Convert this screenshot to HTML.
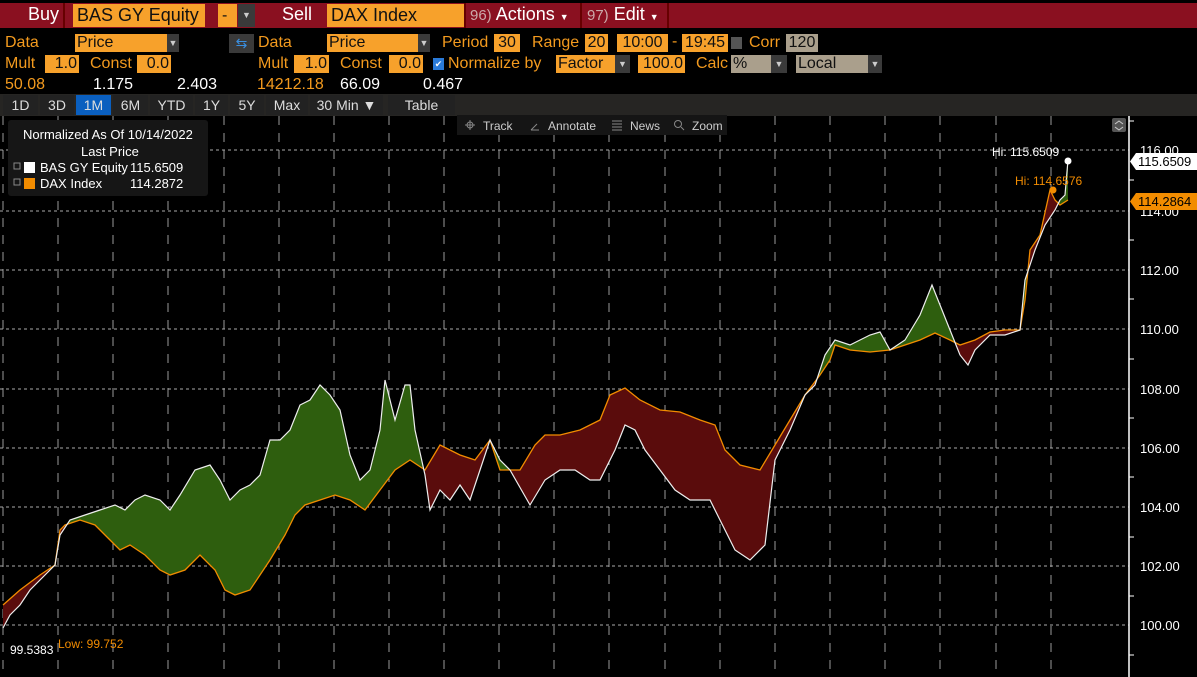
<!DOCTYPE html>
<html><head><meta charset="utf-8"><style>
*{margin:0;padding:0;box-sizing:border-box}
body{width:1197px;height:677px;background:#000;overflow:hidden;position:relative;font-family:"Liberation Sans Narrow","Liberation Sans",sans-serif;color:#f39a1e}
.a{position:absolute;white-space:nowrap}
.red{background:#8a1020}
.ob{background:#f7a12b;color:#111}
.arr{background:#3a3a3a;color:#ccc;font-size:9px;text-align:center}
.lbl{color:#f39a1e;font-size:16px}
.w{color:#fff}
.tab{position:absolute;top:95px;height:20px;background:#222;color:#ddd;font-size:14px;text-align:center;line-height:20px}
.gb{background:#aa9f8c;color:#111}
</style></head><body>
<div class="a red" style="left:0;top:3px;width:1197px;height:25px"></div>
<div class="a" style="left:63px;top:3px;width:2px;height:25px;background:#600"></div>
<div class="a w" style="left:28px;top:4px;font-size:18px">Buy</div>
<div class="a ob" style="left:73px;top:4px;width:132px;height:23px;font-size:18px;padding-left:4px;line-height:23px">BAS GY Equity</div>
<div class="a ob" style="left:218px;top:4px;width:19px;height:23px;font-size:16px;padding-left:4px;line-height:23px">-</div>
<div class="a arr" style="left:238px;top:4px;width:17px;height:23px;line-height:23px">▼</div>
<div class="a w" style="left:282px;top:4px;font-size:18px">Sell</div>
<div class="a ob" style="left:327px;top:4px;width:137px;height:23px;font-size:18px;padding-left:4px;line-height:23px">DAX Index</div>
<div class="a" style="left:464px;top:3px;width:2px;height:25px;background:#600"></div>
<div class="a w" style="left:470px;top:4px;font-size:18px"><span style="color:#caa;font-size:15px">96)</span> Actions <span style="font-size:9px">▼</span></div>
<div class="a" style="left:580px;top:3px;width:2px;height:25px;background:#600"></div>
<div class="a w" style="left:587px;top:4px;font-size:18px"><span style="color:#caa;font-size:15px">97)</span> Edit <span style="font-size:9px">▼</span></div>
<div class="a" style="left:667px;top:3px;width:2px;height:25px;background:#600"></div>

<div class="a lbl" style="left:5px;top:34px">Data</div>
<div class="a ob" style="left:75px;top:34px;width:92px;height:18px;font-size:16px;padding-left:2px;line-height:18px">Price</div>
<div class="a arr" style="left:167px;top:34px;width:12px;height:18px;line-height:18px">▼</div>
<div class="a" style="left:229px;top:34px;width:25px;height:19px;background:#3a3a3a;color:#3a8fe0;font-size:14px;text-align:center;line-height:19px">⇆</div>
<div class="a lbl" style="left:258px;top:34px">Data</div>
<div class="a ob" style="left:327px;top:34px;width:91px;height:18px;font-size:16px;padding-left:2px;line-height:18px">Price</div>
<div class="a arr" style="left:418px;top:34px;width:12px;height:18px;line-height:18px">▼</div>
<div class="a lbl" style="left:442px;top:34px">Period</div>
<div class="a ob" style="left:494px;top:34px;width:26px;height:18px;font-size:16px;text-align:center;line-height:18px">30</div>
<div class="a lbl" style="left:532px;top:34px">Range</div>
<div class="a ob" style="left:585px;top:34px;width:23px;height:18px;font-size:16px;text-align:center;line-height:18px">20</div>
<div class="a ob" style="left:617px;top:34px;width:51px;height:18px;font-size:16px;text-align:center;line-height:18px">10:00</div>
<div class="a lbl" style="left:672px;top:33px">-</div>
<div class="a ob" style="left:682px;top:34px;width:46px;height:18px;font-size:16px;text-align:center;line-height:18px">19:45</div>
<div class="a" style="left:731px;top:37px;width:11px;height:12px;background:#555"></div>
<div class="a lbl" style="left:749px;top:34px">Corr</div>
<div class="a gb" style="left:786px;top:34px;width:32px;height:18px;font-size:16px;text-align:center;line-height:18px">120</div>

<div class="a lbl" style="left:5px;top:55px">Mult</div>
<div class="a ob" style="left:45px;top:55px;width:34px;height:18px;font-size:16px;text-align:right;padding-right:2px;line-height:18px">1.0</div>
<div class="a lbl" style="left:90px;top:55px">Const</div>
<div class="a ob" style="left:137px;top:55px;width:34px;height:18px;font-size:16px;text-align:right;padding-right:2px;line-height:18px">0.0</div>
<div class="a lbl" style="left:258px;top:55px">Mult</div>
<div class="a ob" style="left:294px;top:55px;width:35px;height:18px;font-size:16px;text-align:right;padding-right:2px;line-height:18px">1.0</div>
<div class="a lbl" style="left:340px;top:55px">Const</div>
<div class="a ob" style="left:389px;top:55px;width:34px;height:18px;font-size:16px;text-align:right;padding-right:2px;line-height:18px">0.0</div>
<div class="a" style="left:433px;top:58px;width:11px;height:12px;background:#2a7ad8;color:#fff;font-size:9px;text-align:center;line-height:12px">✔</div>
<div class="a lbl" style="left:448px;top:55px">Normalize by</div>
<div class="a ob" style="left:556px;top:55px;width:59px;height:18px;font-size:16px;padding-left:2px;line-height:18px">Factor</div>
<div class="a arr" style="left:615px;top:55px;width:15px;height:18px;line-height:18px">▼</div>
<div class="a ob" style="left:638px;top:55px;width:47px;height:18px;font-size:16px;text-align:right;padding-right:2px;line-height:18px">100.0</div>
<div class="a lbl" style="left:696px;top:55px">Calc</div>
<div class="a gb" style="left:731px;top:55px;width:40px;height:18px;font-size:16px;padding-left:2px;line-height:18px">%</div>
<div class="a arr" style="left:771px;top:55px;width:16px;height:18px;line-height:18px">▼</div>
<div class="a gb" style="left:796px;top:55px;width:72px;height:18px;font-size:16px;padding-left:2px;line-height:18px">Local</div>
<div class="a arr" style="left:868px;top:55px;width:14px;height:18px;line-height:18px">▼</div>

<div class="a lbl" style="left:5px;top:76px">50.08</div>
<div class="a w" style="left:93px;top:76px;font-size:16px">1.175</div>
<div class="a w" style="left:177px;top:76px;font-size:16px">2.403</div>
<div class="a lbl" style="left:257px;top:76px">14212.18</div>
<div class="a w" style="left:340px;top:76px;font-size:16px">66.09</div>
<div class="a w" style="left:423px;top:76px;font-size:16px">0.467</div>

<div class="a" style="left:0;top:94px;width:1197px;height:22px;background:#262523"></div>
<div class="tab" style="left:3px;width:35px">1D</div>
<div class="tab" style="left:40px;width:34px">3D</div>
<div class="tab" style="left:76px;width:35px;background:#0a5fbf">1M</div>
<div class="tab" style="left:113px;width:35px">6M</div>
<div class="tab" style="left:150px;width:43px">YTD</div>
<div class="tab" style="left:195px;width:33px">1Y</div>
<div class="tab" style="left:230px;width:34px">5Y</div>
<div class="tab" style="left:266px;width:42px">Max</div>
<div class="tab" style="left:310px;width:73px">30 Min ▼</div>
<div class="tab" style="left:388px;width:67px">Table</div>

<svg class="a" style="left:0;top:0" width="1197" height="677" viewBox="0 0 1197 677">
<defs>
<clipPath id="ca"><rect x="0" y="116" width="1129" height="561"/></clipPath>
<clipPath id="aboveO"><polygon points="3,0 3,605 20,590 40,575 55,565 60,530 65,525 80,520 95,525 110,540 120,550 130,545 145,555 160,570 170,575 185,570 200,555 215,570 225,590 235,595 250,590 260,575 270,560 285,535 295,515 305,505 320,500 335,495 350,500 365,510 380,490 395,470 410,460 425,470 440,445 460,455 475,460 490,440 500,470 520,470 535,445 545,435 560,435 580,430 600,420 610,395 625,388 640,400 660,410 680,412 700,420 715,425 725,450 740,465 760,470 775,445 790,420 805,395 820,375 830,360 835,345 850,350 870,352 890,350 905,345 920,340 935,333 950,340 960,345 975,340 990,332 1005,330 1020,330 1025,300 1030,250 1040,235 1050,190 1055,200 1060,205 1068,200 1068,0"/></clipPath>
<clipPath id="aboveW"><polygon points="3,0 3,628 10,615 20,605 30,590 45,575 55,565 60,535 70,520 85,515 100,510 115,505 125,510 135,500 145,495 160,500 170,510 180,495 195,470 210,465 220,480 230,500 240,490 250,485 260,475 270,440 280,440 290,430 300,405 310,400 320,385 330,395 340,410 350,455 360,480 370,470 380,430 385,380 395,420 405,385 410,385 415,430 425,475 430,510 440,490 450,500 460,485 470,500 480,470 490,440 500,460 510,470 530,505 545,480 560,470 575,470 590,480 600,480 615,450 625,425 635,430 645,450 660,470 675,490 690,500 710,500 720,520 735,550 750,560 765,545 775,460 790,430 805,395 815,385 825,355 835,340 850,345 870,335 880,332 890,350 905,340 920,315 932,285 940,305 950,330 960,355 968,365 975,350 990,335 1005,335 1020,330 1025,280 1035,250 1045,225 1055,210 1060,200 1065,195 1068,160 1068,0"/></clipPath>
</defs>
<g stroke="#9a9a9a" stroke-width="1" stroke-dasharray="9,8">
<path d="M3 116V677M58 116V677M113 116V677M168 116V677M224 116V677M279 116V677M334 116V677M389 116V677M444 116V677M499 116V677M554 116V677M609 116V677M665 116V677M720 116V677M775 116V677M830 116V677M885 116V677M940 116V677M996 116V677M1051 116V677"/>
</g>
<g stroke="#aaa" stroke-width="1" stroke-dasharray="3,3">
<path d="M0 150H1129M0 211H1129M0 270H1129M0 329H1129M0 389H1129M0 448H1129M0 507H1129M0 566H1129M0 625H1129"/>
</g>
<g clip-path="url(#ca)">
<g clip-path="url(#aboveO)"><polygon fill="#2e5e0e" points="3,628 10,615 20,605 30,590 45,575 55,565 60,535 70,520 85,515 100,510 115,505 125,510 135,500 145,495 160,500 170,510 180,495 195,470 210,465 220,480 230,500 240,490 250,485 260,475 270,440 280,440 290,430 300,405 310,400 320,385 330,395 340,410 350,455 360,480 370,470 380,430 385,380 395,420 405,385 410,385 415,430 425,475 430,510 440,490 450,500 460,485 470,500 480,470 490,440 500,460 510,470 530,505 545,480 560,470 575,470 590,480 600,480 615,450 625,425 635,430 645,450 660,470 675,490 690,500 710,500 720,520 735,550 750,560 765,545 775,460 790,430 805,395 815,385 825,355 835,340 850,345 870,335 880,332 890,350 905,340 920,315 932,285 940,305 950,330 960,355 968,365 975,350 990,335 1005,335 1020,330 1025,280 1035,250 1045,225 1055,210 1060,200 1065,195 1068,160 1068,677 3,677"/></g>
<g clip-path="url(#aboveW)"><polygon fill="#5a0c0c" points="3,605 20,590 40,575 55,565 60,530 65,525 80,520 95,525 110,540 120,550 130,545 145,555 160,570 170,575 185,570 200,555 215,570 225,590 235,595 250,590 260,575 270,560 285,535 295,515 305,505 320,500 335,495 350,500 365,510 380,490 395,470 410,460 425,470 440,445 460,455 475,460 490,440 500,470 520,470 535,445 545,435 560,435 580,430 600,420 610,395 625,388 640,400 660,410 680,412 700,420 715,425 725,450 740,465 760,470 775,445 790,420 805,395 820,375 830,360 835,345 850,350 870,352 890,350 905,345 920,340 935,333 950,340 960,345 975,340 990,332 1005,330 1020,330 1025,300 1030,250 1040,235 1050,190 1055,200 1060,205 1068,200 1068,677 3,677"/></g>
<polyline fill="none" stroke="#f28c00" stroke-width="1.3" points="3,605 20,590 40,575 55,565 60,530 65,525 80,520 95,525 110,540 120,550 130,545 145,555 160,570 170,575 185,570 200,555 215,570 225,590 235,595 250,590 260,575 270,560 285,535 295,515 305,505 320,500 335,495 350,500 365,510 380,490 395,470 410,460 425,470 440,445 460,455 475,460 490,440 500,470 520,470 535,445 545,435 560,435 580,430 600,420 610,395 625,388 640,400 660,410 680,412 700,420 715,425 725,450 740,465 760,470 775,445 790,420 805,395 820,375 830,360 835,345 850,350 870,352 890,350 905,345 920,340 935,333 950,340 960,345 975,340 990,332 1005,330 1020,330 1025,300 1030,250 1040,235 1050,190 1055,200 1060,205 1068,200"/>
<polyline fill="none" stroke="#eee" stroke-width="1.2" points="3,628 10,615 20,605 30,590 45,575 55,565 60,535 70,520 85,515 100,510 115,505 125,510 135,500 145,495 160,500 170,510 180,495 195,470 210,465 220,480 230,500 240,490 250,485 260,475 270,440 280,440 290,430 300,405 310,400 320,385 330,395 340,410 350,455 360,480 370,470 380,430 385,380 395,420 405,385 410,385 415,430 425,475 430,510 440,490 450,500 460,485 470,500 480,470 490,440 500,460 510,470 530,505 545,480 560,470 575,470 590,480 600,480 615,450 625,425 635,430 645,450 660,470 675,490 690,500 710,500 720,520 735,550 750,560 765,545 775,460 790,430 805,395 815,385 825,355 835,340 850,345 870,335 880,332 890,350 905,340 920,315 932,285 940,305 950,330 960,355 968,365 975,350 990,335 1005,335 1020,330 1025,280 1035,250 1045,225 1055,210 1060,200 1065,195 1068,160"/>
</g>
<circle cx="1068" cy="161" r="3.5" fill="#fff"/>
<circle cx="1053" cy="190" r="3.5" fill="#f28c00"/>
<line x1="1129" y1="116" x2="1129" y2="677" stroke="#fff" stroke-width="1.5"/>
<g stroke="#fff"><path d="M1129 121h5M1129 180h5M1129 240h5M1129 299h5M1129 359h5M1129 418h5M1129 477h5M1129 537h5M1129 596h5M1129 655h5"/></g>
<g fill="#fff" font-family="Liberation Sans Narrow, Liberation Sans, sans-serif" font-size="13">
<text x="1140" y="155">116.00</text><text x="1140" y="216">114.00</text><text x="1140" y="275">112.00</text><text x="1140" y="334">110.00</text><text x="1140" y="394">108.00</text><text x="1140" y="453">106.00</text><text x="1140" y="512">104.00</text><text x="1140" y="571">102.00</text><text x="1140" y="630">100.00</text>
<text x="992" y="156" font-size="12">Hi: 115.6509</text>
<text x="10" y="654" font-size="12">99.5383</text>
</g>
<g fill="#f28c00" font-family="Liberation Sans Narrow, Liberation Sans, sans-serif" font-size="12">
<text x="1015" y="185">Hi: 114.6576</text>
<text x="58" y="648">Low: 99.752</text>
</g>
<polygon points="1136,153 1197,153 1197,170 1136,170 1130,161.5" fill="#fff"/>
<text x="1138" y="166" font-family="Liberation Sans Narrow, Liberation Sans, sans-serif" font-size="13" fill="#000">115.6509</text>
<polygon points="1136,193 1197,193 1197,210 1136,210 1130,201.5" fill="#f28c00"/>
<text x="1138" y="206" font-family="Liberation Sans Narrow, Liberation Sans, sans-serif" font-size="13" fill="#000">114.2864</text>
<rect x="1112" y="118" width="14" height="14" rx="2" fill="#555"/>
<path d="M1115 124l4-3 4 3M1115 127l4 3 4-3" stroke="#ccc" fill="none"/>
<rect x="457" y="115" width="270" height="20" fill="#151515"/>
<g fill="#ccc" font-family="Liberation Sans, sans-serif" font-size="12">
<text x="483" y="130">Track</text><text x="548" y="130">Annotate</text><text x="630" y="130">News</text><text x="692" y="130">Zoom</text>
</g>
<g stroke="#888" fill="none"><circle cx="470" cy="125" r="3"/><path d="M465 125h10M470 120v10M531 130l6-6M531 130h8M612 121h10M612 124h10M612 127h10M612 130h10"/><circle cx="678" cy="124" r="3.5"/><path d="M681 127l3 3"/></g>
<rect x="8" y="120" width="200" height="76" rx="3" fill="#161616"/>
<g fill="#fff" font-family="Liberation Sans Narrow, Liberation Sans, sans-serif" font-size="13">
<text x="23" y="139">Normalized As Of 10/14/2022</text>
<text x="81" y="156">Last Price</text>
<text x="40" y="172">BAS GY Equity</text><text x="130" y="172">115.6509</text>
<text x="40" y="188">DAX Index</text><text x="130" y="188">114.2872</text>
</g>
<rect x="14" y="163" width="6" height="6" fill="none" stroke="#888"/><rect x="24" y="162" width="11" height="11" fill="#fff"/>
<rect x="14" y="179" width="6" height="6" fill="none" stroke="#888"/><rect x="24" y="178" width="11" height="11" fill="#f28c00"/>
</svg>
</body></html>
